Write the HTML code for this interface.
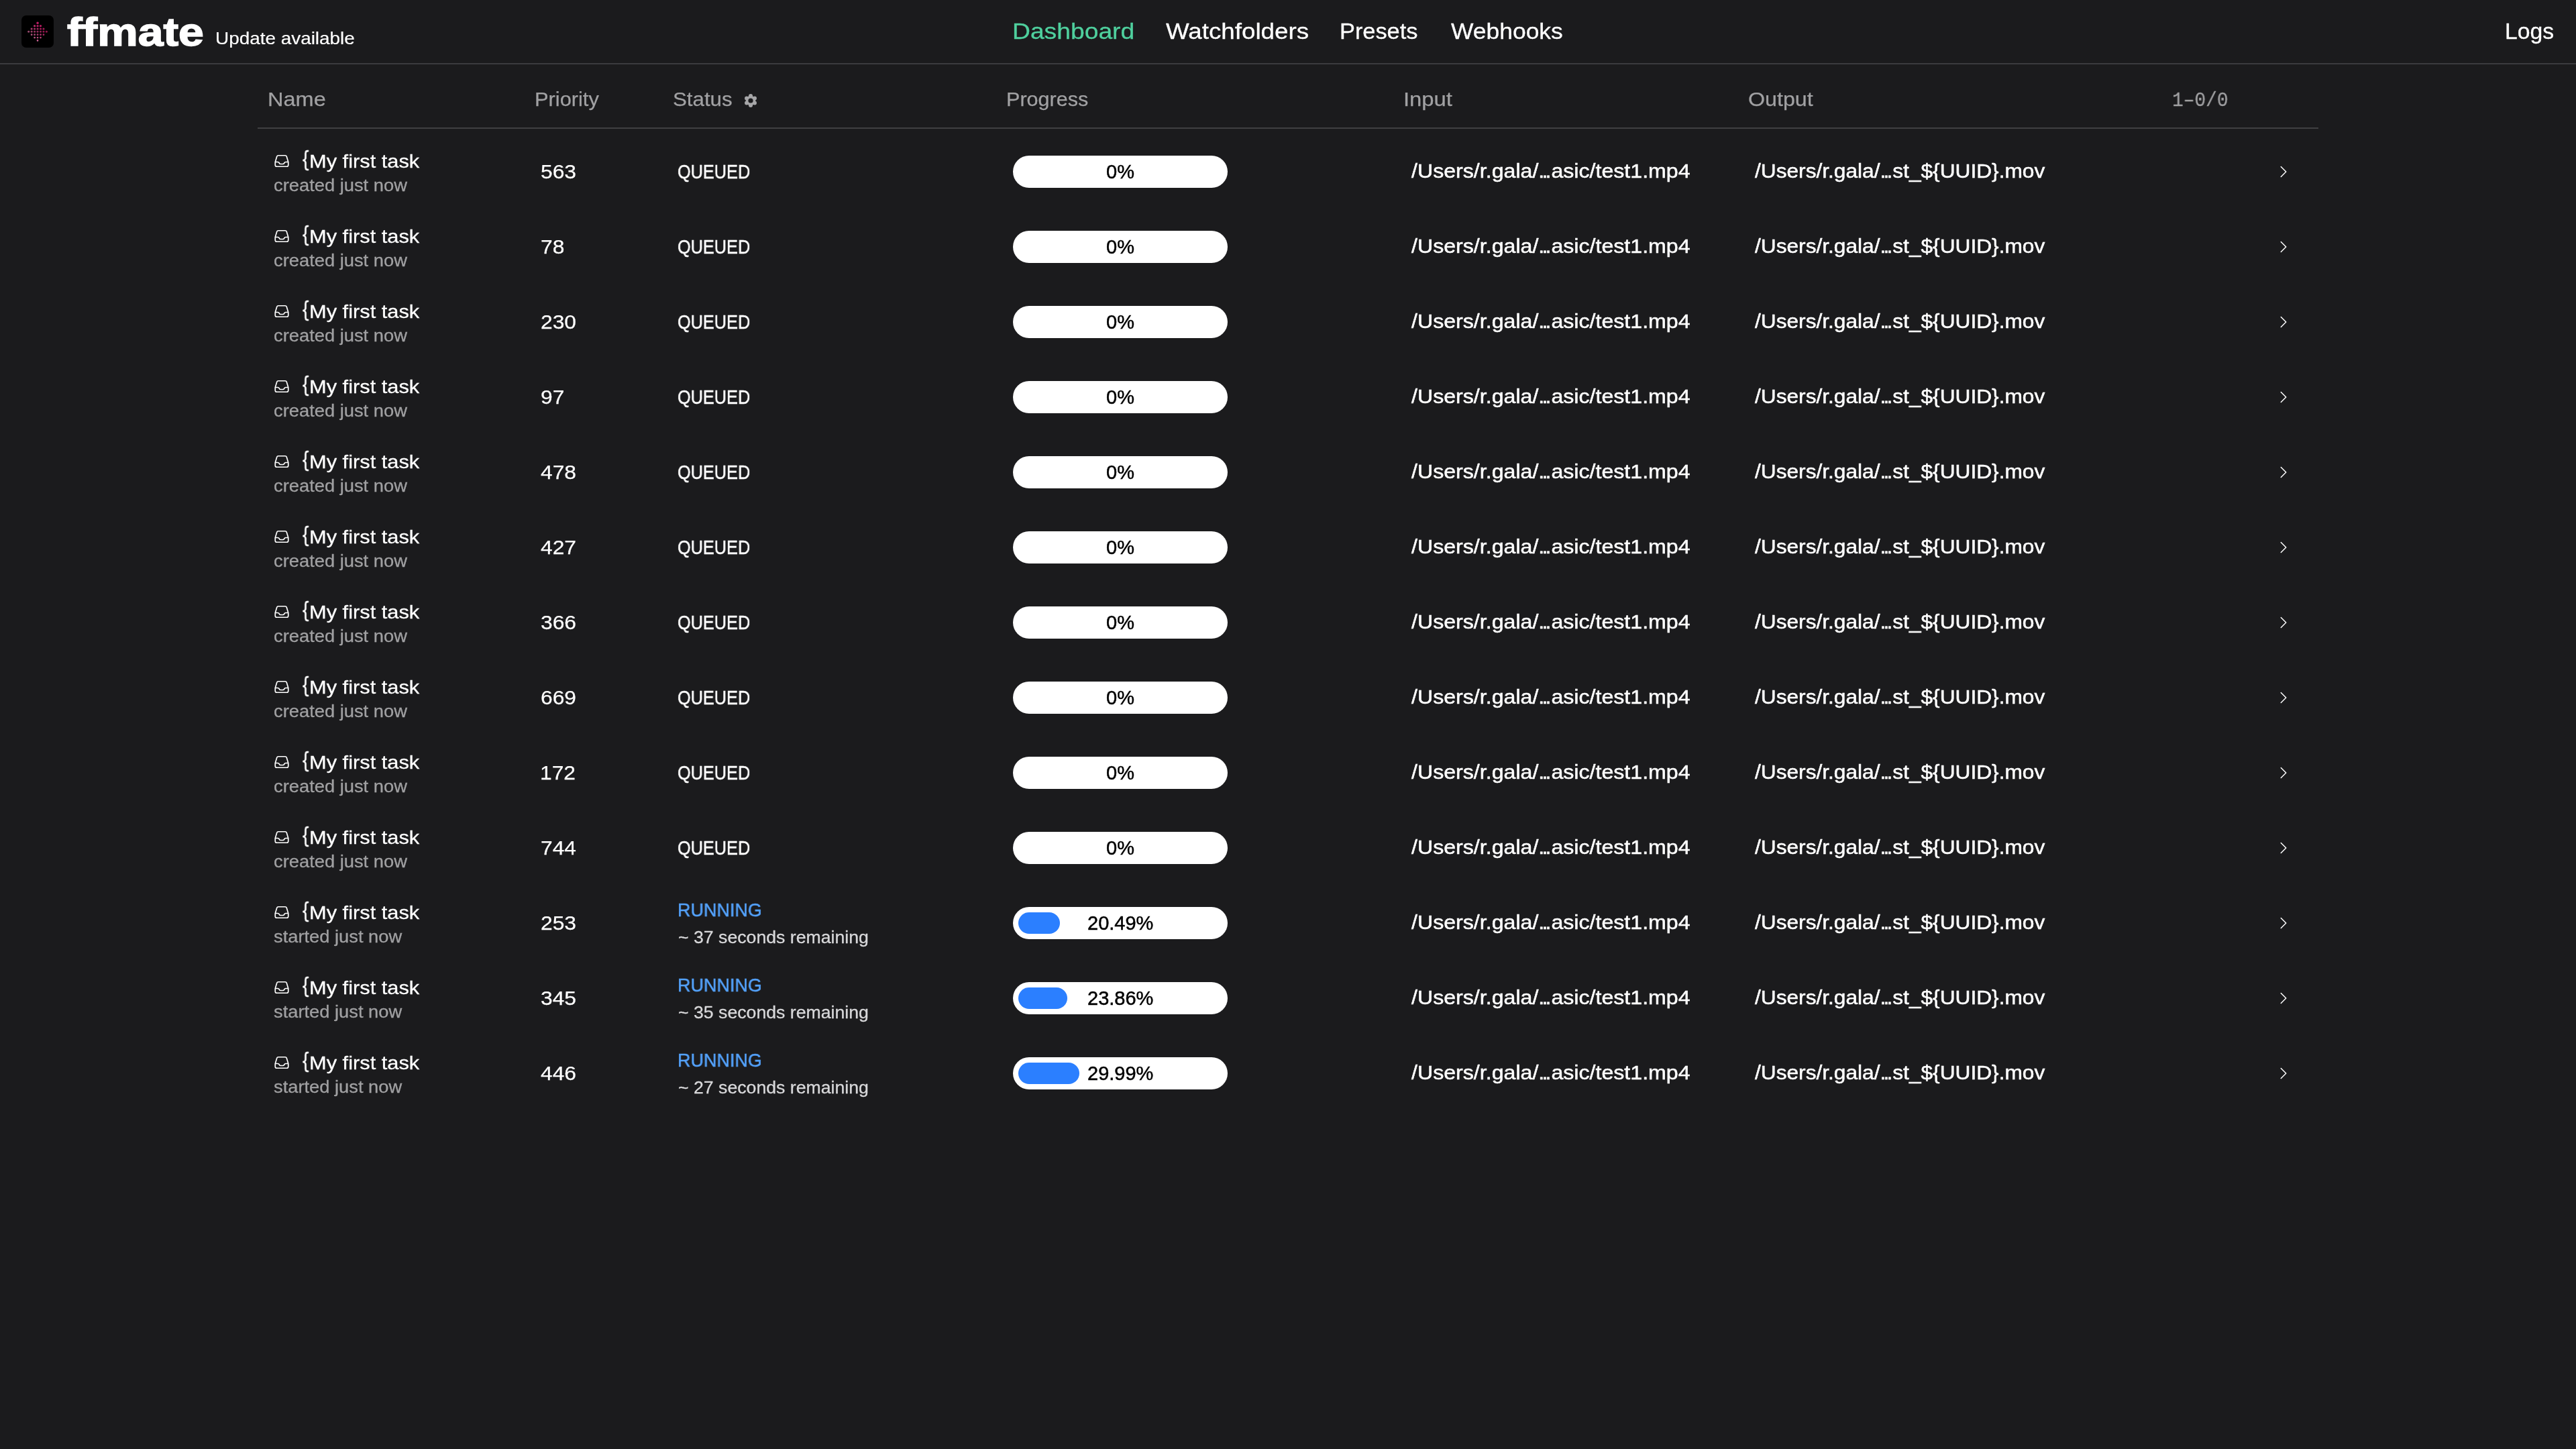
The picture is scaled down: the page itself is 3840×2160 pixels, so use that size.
<!DOCTYPE html>
<html><head><meta charset="utf-8"><title>ffmate</title>
<style>
html,body{margin:0;padding:0;width:3840px;height:2160px;overflow:hidden;background:#1b1b1d;}
body{position:relative;font-family:'Liberation Sans', sans-serif;}
.t{position:absolute;white-space:pre;line-height:1;transform-origin:0 0;will-change:transform;}
.pill{position:absolute;left:1510px;width:320px;height:48px;border-radius:24px;background:#fff;}
.bar{position:absolute;left:1518px;height:32px;border-radius:16px;background:#2b7fff;}
</style></head><body>
<script>(function(){var s=window.innerWidth/3840;if(s>0&&Math.abs(s-1)>0.01){document.documentElement.style.zoom=s;}})();</script>
<div style="position:absolute;left:32px;top:23px;width:48px;height:48px;border-radius:7px;background:#000"></div><svg style="position:absolute;left:32px;top:23px" width="48" height="48" viewBox="0 0 48 48"><circle cx="24.05" cy="11.30" r="1.70" fill="#cd206e" fill-opacity="0.95"/><circle cx="19.60" cy="15.65" r="1.63" fill="#cf2e77" fill-opacity="0.87"/><circle cx="24.05" cy="15.65" r="1.63" fill="#cd206e" fill-opacity="0.87"/><circle cx="28.50" cy="15.65" r="1.63" fill="#cd206e" fill-opacity="0.87"/><circle cx="15.15" cy="20.00" r="1.56" fill="#d44c8a" fill-opacity="0.78"/><circle cx="19.60" cy="20.00" r="1.56" fill="#d23d81" fill-opacity="0.78"/><circle cx="24.05" cy="20.00" r="1.56" fill="#cf2e77" fill-opacity="0.78"/><circle cx="28.50" cy="20.00" r="1.56" fill="#cd206e" fill-opacity="0.78"/><circle cx="32.95" cy="20.00" r="1.56" fill="#cd206e" fill-opacity="0.78"/><circle cx="10.70" cy="24.35" r="1.49" fill="#da699d" fill-opacity="0.70"/><circle cx="15.15" cy="24.35" r="1.49" fill="#d75b94" fill-opacity="0.70"/><circle cx="19.60" cy="24.35" r="1.49" fill="#d44c8a" fill-opacity="0.70"/><circle cx="24.05" cy="24.35" r="1.49" fill="#d23d81" fill-opacity="0.70"/><circle cx="28.50" cy="24.35" r="1.49" fill="#cf2e77" fill-opacity="0.70"/><circle cx="32.95" cy="24.35" r="1.49" fill="#cd206e" fill-opacity="0.70"/><circle cx="37.40" cy="24.35" r="1.49" fill="#cd206e" fill-opacity="0.70"/><circle cx="15.15" cy="28.70" r="1.42" fill="#da699d" fill-opacity="0.78"/><circle cx="19.60" cy="28.70" r="1.42" fill="#d75b94" fill-opacity="0.78"/><circle cx="24.05" cy="28.70" r="1.42" fill="#d44c8a" fill-opacity="0.78"/><circle cx="28.50" cy="28.70" r="1.42" fill="#d23d81" fill-opacity="0.78"/><circle cx="32.95" cy="28.70" r="1.42" fill="#cf2e77" fill-opacity="0.78"/><circle cx="19.60" cy="33.05" r="1.35" fill="#da699d" fill-opacity="0.87"/><circle cx="24.05" cy="33.05" r="1.35" fill="#d75b94" fill-opacity="0.87"/><circle cx="28.50" cy="33.05" r="1.35" fill="#d44c8a" fill-opacity="0.87"/><circle cx="24.05" cy="37.40" r="1.28" fill="#da699d" fill-opacity="0.95"/></svg><div style="position:absolute;left:0;top:94px;width:3840px;height:2px;background:#3b3b3e"></div><div style="position:absolute;left:384px;top:190px;width:3072px;height:2px;background:#3f3f42"></div><svg style="position:absolute;left:1109px;top:140px" width="20" height="20" viewBox="0 0 20 20"><g fill="#a6a6a8"><circle cx="10" cy="10" r="7.3"/><circle cx="10.00" cy="3.10" r="3.0"/><circle cx="15.98" cy="6.55" r="3.0"/><circle cx="15.98" cy="13.45" r="3.0"/><circle cx="10.00" cy="16.90" r="3.0"/><circle cx="4.02" cy="13.45" r="3.0"/><circle cx="4.02" cy="6.55" r="3.0"/></g><circle cx="10" cy="10" r="3.6" fill="#1b1b1d"/></svg><svg style="position:absolute;left:408px;top:228px" width="24" height="24" viewBox="0 0 24 24" fill="none" stroke="#fff" stroke-width="1.7"><path stroke-linecap="round" stroke-linejoin="round" d="M2.25 13.5h3.86a2.25 2.25 0 0 1 2.012 1.244l.256.512a2.25 2.25 0 0 0 2.013 1.244h3.218a2.25 2.25 0 0 0 2.013-1.244l.256-.512a2.25 2.25 0 0 1 2.013-1.244h3.859m-19.5.338V18a2.25 2.25 0 0 0 2.25 2.25h15A2.25 2.25 0 0 0 21.75 18v-4.162c0-.224-.034-.447-.1-.661L19.24 5.338a2.25 2.25 0 0 0-2.15-1.588H6.911a2.25 2.25 0 0 0-2.15 1.588L2.35 13.177a2.25 2.25 0 0 0-.1.661Z"/></svg><div class="pill" style="top:232px"></div><svg style="position:absolute;left:3392px;top:244px" width="24" height="24" viewBox="0 0 24 24" fill="none" stroke="#fff" stroke-width="1.5"><path stroke-linecap="round" stroke-linejoin="round" d="m8.25 4.5 7.5 7.5-7.5 7.5"/></svg><svg style="position:absolute;left:408px;top:340px" width="24" height="24" viewBox="0 0 24 24" fill="none" stroke="#fff" stroke-width="1.7"><path stroke-linecap="round" stroke-linejoin="round" d="M2.25 13.5h3.86a2.25 2.25 0 0 1 2.012 1.244l.256.512a2.25 2.25 0 0 0 2.013 1.244h3.218a2.25 2.25 0 0 0 2.013-1.244l.256-.512a2.25 2.25 0 0 1 2.013-1.244h3.859m-19.5.338V18a2.25 2.25 0 0 0 2.25 2.25h15A2.25 2.25 0 0 0 21.75 18v-4.162c0-.224-.034-.447-.1-.661L19.24 5.338a2.25 2.25 0 0 0-2.15-1.588H6.911a2.25 2.25 0 0 0-2.15 1.588L2.35 13.177a2.25 2.25 0 0 0-.1.661Z"/></svg><div class="pill" style="top:344px"></div><svg style="position:absolute;left:3392px;top:356px" width="24" height="24" viewBox="0 0 24 24" fill="none" stroke="#fff" stroke-width="1.5"><path stroke-linecap="round" stroke-linejoin="round" d="m8.25 4.5 7.5 7.5-7.5 7.5"/></svg><svg style="position:absolute;left:408px;top:452px" width="24" height="24" viewBox="0 0 24 24" fill="none" stroke="#fff" stroke-width="1.7"><path stroke-linecap="round" stroke-linejoin="round" d="M2.25 13.5h3.86a2.25 2.25 0 0 1 2.012 1.244l.256.512a2.25 2.25 0 0 0 2.013 1.244h3.218a2.25 2.25 0 0 0 2.013-1.244l.256-.512a2.25 2.25 0 0 1 2.013-1.244h3.859m-19.5.338V18a2.25 2.25 0 0 0 2.25 2.25h15A2.25 2.25 0 0 0 21.75 18v-4.162c0-.224-.034-.447-.1-.661L19.24 5.338a2.25 2.25 0 0 0-2.15-1.588H6.911a2.25 2.25 0 0 0-2.15 1.588L2.35 13.177a2.25 2.25 0 0 0-.1.661Z"/></svg><div class="pill" style="top:456px"></div><svg style="position:absolute;left:3392px;top:468px" width="24" height="24" viewBox="0 0 24 24" fill="none" stroke="#fff" stroke-width="1.5"><path stroke-linecap="round" stroke-linejoin="round" d="m8.25 4.5 7.5 7.5-7.5 7.5"/></svg><svg style="position:absolute;left:408px;top:564px" width="24" height="24" viewBox="0 0 24 24" fill="none" stroke="#fff" stroke-width="1.7"><path stroke-linecap="round" stroke-linejoin="round" d="M2.25 13.5h3.86a2.25 2.25 0 0 1 2.012 1.244l.256.512a2.25 2.25 0 0 0 2.013 1.244h3.218a2.25 2.25 0 0 0 2.013-1.244l.256-.512a2.25 2.25 0 0 1 2.013-1.244h3.859m-19.5.338V18a2.25 2.25 0 0 0 2.25 2.25h15A2.25 2.25 0 0 0 21.75 18v-4.162c0-.224-.034-.447-.1-.661L19.24 5.338a2.25 2.25 0 0 0-2.15-1.588H6.911a2.25 2.25 0 0 0-2.15 1.588L2.35 13.177a2.25 2.25 0 0 0-.1.661Z"/></svg><div class="pill" style="top:568px"></div><svg style="position:absolute;left:3392px;top:580px" width="24" height="24" viewBox="0 0 24 24" fill="none" stroke="#fff" stroke-width="1.5"><path stroke-linecap="round" stroke-linejoin="round" d="m8.25 4.5 7.5 7.5-7.5 7.5"/></svg><svg style="position:absolute;left:408px;top:676px" width="24" height="24" viewBox="0 0 24 24" fill="none" stroke="#fff" stroke-width="1.7"><path stroke-linecap="round" stroke-linejoin="round" d="M2.25 13.5h3.86a2.25 2.25 0 0 1 2.012 1.244l.256.512a2.25 2.25 0 0 0 2.013 1.244h3.218a2.25 2.25 0 0 0 2.013-1.244l.256-.512a2.25 2.25 0 0 1 2.013-1.244h3.859m-19.5.338V18a2.25 2.25 0 0 0 2.25 2.25h15A2.25 2.25 0 0 0 21.75 18v-4.162c0-.224-.034-.447-.1-.661L19.24 5.338a2.25 2.25 0 0 0-2.15-1.588H6.911a2.25 2.25 0 0 0-2.15 1.588L2.35 13.177a2.25 2.25 0 0 0-.1.661Z"/></svg><div class="pill" style="top:680px"></div><svg style="position:absolute;left:3392px;top:692px" width="24" height="24" viewBox="0 0 24 24" fill="none" stroke="#fff" stroke-width="1.5"><path stroke-linecap="round" stroke-linejoin="round" d="m8.25 4.5 7.5 7.5-7.5 7.5"/></svg><svg style="position:absolute;left:408px;top:788px" width="24" height="24" viewBox="0 0 24 24" fill="none" stroke="#fff" stroke-width="1.7"><path stroke-linecap="round" stroke-linejoin="round" d="M2.25 13.5h3.86a2.25 2.25 0 0 1 2.012 1.244l.256.512a2.25 2.25 0 0 0 2.013 1.244h3.218a2.25 2.25 0 0 0 2.013-1.244l.256-.512a2.25 2.25 0 0 1 2.013-1.244h3.859m-19.5.338V18a2.25 2.25 0 0 0 2.25 2.25h15A2.25 2.25 0 0 0 21.75 18v-4.162c0-.224-.034-.447-.1-.661L19.24 5.338a2.25 2.25 0 0 0-2.15-1.588H6.911a2.25 2.25 0 0 0-2.15 1.588L2.35 13.177a2.25 2.25 0 0 0-.1.661Z"/></svg><div class="pill" style="top:792px"></div><svg style="position:absolute;left:3392px;top:804px" width="24" height="24" viewBox="0 0 24 24" fill="none" stroke="#fff" stroke-width="1.5"><path stroke-linecap="round" stroke-linejoin="round" d="m8.25 4.5 7.5 7.5-7.5 7.5"/></svg><svg style="position:absolute;left:408px;top:900px" width="24" height="24" viewBox="0 0 24 24" fill="none" stroke="#fff" stroke-width="1.7"><path stroke-linecap="round" stroke-linejoin="round" d="M2.25 13.5h3.86a2.25 2.25 0 0 1 2.012 1.244l.256.512a2.25 2.25 0 0 0 2.013 1.244h3.218a2.25 2.25 0 0 0 2.013-1.244l.256-.512a2.25 2.25 0 0 1 2.013-1.244h3.859m-19.5.338V18a2.25 2.25 0 0 0 2.25 2.25h15A2.25 2.25 0 0 0 21.75 18v-4.162c0-.224-.034-.447-.1-.661L19.24 5.338a2.25 2.25 0 0 0-2.15-1.588H6.911a2.25 2.25 0 0 0-2.15 1.588L2.35 13.177a2.25 2.25 0 0 0-.1.661Z"/></svg><div class="pill" style="top:904px"></div><svg style="position:absolute;left:3392px;top:916px" width="24" height="24" viewBox="0 0 24 24" fill="none" stroke="#fff" stroke-width="1.5"><path stroke-linecap="round" stroke-linejoin="round" d="m8.25 4.5 7.5 7.5-7.5 7.5"/></svg><svg style="position:absolute;left:408px;top:1012px" width="24" height="24" viewBox="0 0 24 24" fill="none" stroke="#fff" stroke-width="1.7"><path stroke-linecap="round" stroke-linejoin="round" d="M2.25 13.5h3.86a2.25 2.25 0 0 1 2.012 1.244l.256.512a2.25 2.25 0 0 0 2.013 1.244h3.218a2.25 2.25 0 0 0 2.013-1.244l.256-.512a2.25 2.25 0 0 1 2.013-1.244h3.859m-19.5.338V18a2.25 2.25 0 0 0 2.25 2.25h15A2.25 2.25 0 0 0 21.75 18v-4.162c0-.224-.034-.447-.1-.661L19.24 5.338a2.25 2.25 0 0 0-2.15-1.588H6.911a2.25 2.25 0 0 0-2.15 1.588L2.35 13.177a2.25 2.25 0 0 0-.1.661Z"/></svg><div class="pill" style="top:1016px"></div><svg style="position:absolute;left:3392px;top:1028px" width="24" height="24" viewBox="0 0 24 24" fill="none" stroke="#fff" stroke-width="1.5"><path stroke-linecap="round" stroke-linejoin="round" d="m8.25 4.5 7.5 7.5-7.5 7.5"/></svg><svg style="position:absolute;left:408px;top:1124px" width="24" height="24" viewBox="0 0 24 24" fill="none" stroke="#fff" stroke-width="1.7"><path stroke-linecap="round" stroke-linejoin="round" d="M2.25 13.5h3.86a2.25 2.25 0 0 1 2.012 1.244l.256.512a2.25 2.25 0 0 0 2.013 1.244h3.218a2.25 2.25 0 0 0 2.013-1.244l.256-.512a2.25 2.25 0 0 1 2.013-1.244h3.859m-19.5.338V18a2.25 2.25 0 0 0 2.25 2.25h15A2.25 2.25 0 0 0 21.75 18v-4.162c0-.224-.034-.447-.1-.661L19.24 5.338a2.25 2.25 0 0 0-2.15-1.588H6.911a2.25 2.25 0 0 0-2.15 1.588L2.35 13.177a2.25 2.25 0 0 0-.1.661Z"/></svg><div class="pill" style="top:1128px"></div><svg style="position:absolute;left:3392px;top:1140px" width="24" height="24" viewBox="0 0 24 24" fill="none" stroke="#fff" stroke-width="1.5"><path stroke-linecap="round" stroke-linejoin="round" d="m8.25 4.5 7.5 7.5-7.5 7.5"/></svg><svg style="position:absolute;left:408px;top:1236px" width="24" height="24" viewBox="0 0 24 24" fill="none" stroke="#fff" stroke-width="1.7"><path stroke-linecap="round" stroke-linejoin="round" d="M2.25 13.5h3.86a2.25 2.25 0 0 1 2.012 1.244l.256.512a2.25 2.25 0 0 0 2.013 1.244h3.218a2.25 2.25 0 0 0 2.013-1.244l.256-.512a2.25 2.25 0 0 1 2.013-1.244h3.859m-19.5.338V18a2.25 2.25 0 0 0 2.25 2.25h15A2.25 2.25 0 0 0 21.75 18v-4.162c0-.224-.034-.447-.1-.661L19.24 5.338a2.25 2.25 0 0 0-2.15-1.588H6.911a2.25 2.25 0 0 0-2.15 1.588L2.35 13.177a2.25 2.25 0 0 0-.1.661Z"/></svg><div class="pill" style="top:1240px"></div><svg style="position:absolute;left:3392px;top:1252px" width="24" height="24" viewBox="0 0 24 24" fill="none" stroke="#fff" stroke-width="1.5"><path stroke-linecap="round" stroke-linejoin="round" d="m8.25 4.5 7.5 7.5-7.5 7.5"/></svg><svg style="position:absolute;left:408px;top:1348px" width="24" height="24" viewBox="0 0 24 24" fill="none" stroke="#fff" stroke-width="1.7"><path stroke-linecap="round" stroke-linejoin="round" d="M2.25 13.5h3.86a2.25 2.25 0 0 1 2.012 1.244l.256.512a2.25 2.25 0 0 0 2.013 1.244h3.218a2.25 2.25 0 0 0 2.013-1.244l.256-.512a2.25 2.25 0 0 1 2.013-1.244h3.859m-19.5.338V18a2.25 2.25 0 0 0 2.25 2.25h15A2.25 2.25 0 0 0 21.75 18v-4.162c0-.224-.034-.447-.1-.661L19.24 5.338a2.25 2.25 0 0 0-2.15-1.588H6.911a2.25 2.25 0 0 0-2.15 1.588L2.35 13.177a2.25 2.25 0 0 0-.1.661Z"/></svg><div class="pill" style="top:1352px"></div><div class="bar" style="top:1360px;width:62.29px"></div><svg style="position:absolute;left:3392px;top:1364px" width="24" height="24" viewBox="0 0 24 24" fill="none" stroke="#fff" stroke-width="1.5"><path stroke-linecap="round" stroke-linejoin="round" d="m8.25 4.5 7.5 7.5-7.5 7.5"/></svg><svg style="position:absolute;left:408px;top:1460px" width="24" height="24" viewBox="0 0 24 24" fill="none" stroke="#fff" stroke-width="1.7"><path stroke-linecap="round" stroke-linejoin="round" d="M2.25 13.5h3.86a2.25 2.25 0 0 1 2.012 1.244l.256.512a2.25 2.25 0 0 0 2.013 1.244h3.218a2.25 2.25 0 0 0 2.013-1.244l.256-.512a2.25 2.25 0 0 1 2.013-1.244h3.859m-19.5.338V18a2.25 2.25 0 0 0 2.25 2.25h15A2.25 2.25 0 0 0 21.75 18v-4.162c0-.224-.034-.447-.1-.661L19.24 5.338a2.25 2.25 0 0 0-2.15-1.588H6.911a2.25 2.25 0 0 0-2.15 1.588L2.35 13.177a2.25 2.25 0 0 0-.1.661Z"/></svg><div class="pill" style="top:1464px"></div><div class="bar" style="top:1472px;width:72.53px"></div><svg style="position:absolute;left:3392px;top:1476px" width="24" height="24" viewBox="0 0 24 24" fill="none" stroke="#fff" stroke-width="1.5"><path stroke-linecap="round" stroke-linejoin="round" d="m8.25 4.5 7.5 7.5-7.5 7.5"/></svg><svg style="position:absolute;left:408px;top:1572px" width="24" height="24" viewBox="0 0 24 24" fill="none" stroke="#fff" stroke-width="1.7"><path stroke-linecap="round" stroke-linejoin="round" d="M2.25 13.5h3.86a2.25 2.25 0 0 1 2.012 1.244l.256.512a2.25 2.25 0 0 0 2.013 1.244h3.218a2.25 2.25 0 0 0 2.013-1.244l.256-.512a2.25 2.25 0 0 1 2.013-1.244h3.859m-19.5.338V18a2.25 2.25 0 0 0 2.25 2.25h15A2.25 2.25 0 0 0 21.75 18v-4.162c0-.224-.034-.447-.1-.661L19.24 5.338a2.25 2.25 0 0 0-2.15-1.588H6.911a2.25 2.25 0 0 0-2.15 1.588L2.35 13.177a2.25 2.25 0 0 0-.1.661Z"/></svg><div class="pill" style="top:1576px"></div><div class="bar" style="top:1584px;width:91.17px"></div><svg style="position:absolute;left:3392px;top:1588px" width="24" height="24" viewBox="0 0 24 24" fill="none" stroke="#fff" stroke-width="1.5"><path stroke-linecap="round" stroke-linejoin="round" d="m8.25 4.5 7.5 7.5-7.5 7.5"/></svg>
<div class="t" style="left:99.67px;top:18.30px;font-size:60px;font-weight:700;color:#ffffff;transform:scaleX(1.1322);-webkit-text-stroke:1.6px #ffffff;">ffmate</div><div class="t" style="left:321.17px;top:45.00px;font-size:25px;color:#ffffff;transform:scaleX(1.1158);-webkit-text-stroke:0.2px #ffffff;">Update available</div><div class="t" style="left:1508.76px;top:29.80px;font-size:33px;color:#4fd09e;transform:scaleX(1.1288);-webkit-text-stroke:0.3px #4fd09e;">Dashboard</div><div class="t" style="left:1738.15px;top:29.80px;font-size:33px;color:#ffffff;transform:scaleX(1.1132);-webkit-text-stroke:0.3px #ffffff;">Watchfolders</div><div class="t" style="left:1997.03px;top:29.80px;font-size:33px;color:#ffffff;transform:scaleX(1.0407);-webkit-text-stroke:0.3px #ffffff;">Presets</div><div class="t" style="left:2162.75px;top:29.80px;font-size:33px;color:#ffffff;transform:scaleX(1.0740);-webkit-text-stroke:0.3px #ffffff;">Webhooks</div><div class="t" style="left:3733.78px;top:30.10px;font-size:33px;color:#ffffff;transform:scaleX(1.0221);-webkit-text-stroke:0.3px #ffffff;">Logs</div><div class="t" style="left:398.88px;top:134.30px;font-size:29px;color:#a1a1a3;transform:scaleX(1.1223);-webkit-text-stroke:0.25px #a1a1a3;">Name</div><div class="t" style="left:797.00px;top:134.30px;font-size:29px;color:#a1a1a3;transform:scaleX(1.0619);-webkit-text-stroke:0.25px #a1a1a3;">Priority</div><div class="t" style="left:1002.55px;top:134.30px;font-size:29px;color:#a1a1a3;transform:scaleX(1.0781);-webkit-text-stroke:0.25px #a1a1a3;">Status</div><div class="t" style="left:1500.22px;top:134.30px;font-size:29px;color:#a1a1a3;transform:scaleX(1.0535);-webkit-text-stroke:0.25px #a1a1a3;">Progress</div><div class="t" style="left:2092.03px;top:134.30px;font-size:29px;color:#a1a1a3;transform:scaleX(1.1315);-webkit-text-stroke:0.25px #a1a1a3;">Input</div><div class="t" style="left:2606.32px;top:134.30px;font-size:29px;color:#a1a1a3;transform:scaleX(1.1099);-webkit-text-stroke:0.25px #a1a1a3;">Output</div><div class="t" style="left:3237.89px;top:134.80px;font-size:30px;color:#a1a1a3;transform:scaleX(0.9279);font-family:'Liberation Mono', monospace;-webkit-text-stroke:0.3px #a1a1a3;">1–0/0</div><div class="t" style="left:450.75px;top:220.00px;font-size:32px;color:#ffffff;transform:scaleX(0.8700);-webkit-text-stroke:0.3px #ffffff;">{</div><div class="t" style="left:460.65px;top:227.00px;font-size:28px;color:#ffffff;transform:scaleX(1.1000);-webkit-text-stroke:0.3px #ffffff;">My first task</div><div class="t" style="left:408.30px;top:262.70px;font-size:26px;color:#a0a0a2;transform:scaleX(1.0505);-webkit-text-stroke:0.3px #a0a0a2;">created just now</div><div class="t" style="left:806.33px;top:241.50px;font-size:29px;color:#ffffff;transform:scaleX(1.0935);-webkit-text-stroke:0.25px #ffffff;">563</div><div class="t" style="left:1010.35px;top:241.80px;font-size:29px;color:#ffffff;transform:scaleX(0.8717);-webkit-text-stroke:0.45px #ffffff;">QUEUED</div><div class="t" style="left:1649.31px;top:242.00px;font-size:29px;color:#000000;transform:scaleX(0.9969);-webkit-text-stroke:0.5px #000000;">0%</div><div class="t" style="left:2104.05px;top:241.30px;font-size:29px;color:#ffffff;transform:scaleX(1.1083);-webkit-text-stroke:0.5px #ffffff;">/Users/r.gala/<span style="letter-spacing:-3.5px">..</span>.asic/test1.mp4</div><div class="t" style="left:2616.15px;top:241.30px;font-size:29px;color:#ffffff;transform:scaleX(1.0917);-webkit-text-stroke:0.5px #ffffff;">/Users/r.gala/<span style="letter-spacing:-3.5px">..</span>.st_${UUID}.mov</div><div class="t" style="left:450.75px;top:332.00px;font-size:32px;color:#ffffff;transform:scaleX(0.8700);-webkit-text-stroke:0.3px #ffffff;">{</div><div class="t" style="left:460.65px;top:339.00px;font-size:28px;color:#ffffff;transform:scaleX(1.1000);-webkit-text-stroke:0.3px #ffffff;">My first task</div><div class="t" style="left:408.30px;top:374.70px;font-size:26px;color:#a0a0a2;transform:scaleX(1.0505);-webkit-text-stroke:0.3px #a0a0a2;">created just now</div><div class="t" style="left:806.33px;top:353.50px;font-size:29px;color:#ffffff;transform:scaleX(1.0935);-webkit-text-stroke:0.25px #ffffff;">78</div><div class="t" style="left:1010.35px;top:353.80px;font-size:29px;color:#ffffff;transform:scaleX(0.8717);-webkit-text-stroke:0.45px #ffffff;">QUEUED</div><div class="t" style="left:1649.31px;top:354.00px;font-size:29px;color:#000000;transform:scaleX(0.9969);-webkit-text-stroke:0.5px #000000;">0%</div><div class="t" style="left:2104.05px;top:353.30px;font-size:29px;color:#ffffff;transform:scaleX(1.1083);-webkit-text-stroke:0.5px #ffffff;">/Users/r.gala/<span style="letter-spacing:-3.5px">..</span>.asic/test1.mp4</div><div class="t" style="left:2616.15px;top:353.30px;font-size:29px;color:#ffffff;transform:scaleX(1.0917);-webkit-text-stroke:0.5px #ffffff;">/Users/r.gala/<span style="letter-spacing:-3.5px">..</span>.st_${UUID}.mov</div><div class="t" style="left:450.75px;top:444.00px;font-size:32px;color:#ffffff;transform:scaleX(0.8700);-webkit-text-stroke:0.3px #ffffff;">{</div><div class="t" style="left:460.65px;top:451.00px;font-size:28px;color:#ffffff;transform:scaleX(1.1000);-webkit-text-stroke:0.3px #ffffff;">My first task</div><div class="t" style="left:408.30px;top:486.70px;font-size:26px;color:#a0a0a2;transform:scaleX(1.0505);-webkit-text-stroke:0.3px #a0a0a2;">created just now</div><div class="t" style="left:806.33px;top:465.50px;font-size:29px;color:#ffffff;transform:scaleX(1.0935);-webkit-text-stroke:0.25px #ffffff;">230</div><div class="t" style="left:1010.35px;top:465.80px;font-size:29px;color:#ffffff;transform:scaleX(0.8717);-webkit-text-stroke:0.45px #ffffff;">QUEUED</div><div class="t" style="left:1649.31px;top:466.00px;font-size:29px;color:#000000;transform:scaleX(0.9969);-webkit-text-stroke:0.5px #000000;">0%</div><div class="t" style="left:2104.05px;top:465.30px;font-size:29px;color:#ffffff;transform:scaleX(1.1083);-webkit-text-stroke:0.5px #ffffff;">/Users/r.gala/<span style="letter-spacing:-3.5px">..</span>.asic/test1.mp4</div><div class="t" style="left:2616.15px;top:465.30px;font-size:29px;color:#ffffff;transform:scaleX(1.0917);-webkit-text-stroke:0.5px #ffffff;">/Users/r.gala/<span style="letter-spacing:-3.5px">..</span>.st_${UUID}.mov</div><div class="t" style="left:450.75px;top:556.00px;font-size:32px;color:#ffffff;transform:scaleX(0.8700);-webkit-text-stroke:0.3px #ffffff;">{</div><div class="t" style="left:460.65px;top:563.00px;font-size:28px;color:#ffffff;transform:scaleX(1.1000);-webkit-text-stroke:0.3px #ffffff;">My first task</div><div class="t" style="left:408.30px;top:598.70px;font-size:26px;color:#a0a0a2;transform:scaleX(1.0505);-webkit-text-stroke:0.3px #a0a0a2;">created just now</div><div class="t" style="left:806.33px;top:577.50px;font-size:29px;color:#ffffff;transform:scaleX(1.0935);-webkit-text-stroke:0.25px #ffffff;">97</div><div class="t" style="left:1010.35px;top:577.80px;font-size:29px;color:#ffffff;transform:scaleX(0.8717);-webkit-text-stroke:0.45px #ffffff;">QUEUED</div><div class="t" style="left:1649.31px;top:578.00px;font-size:29px;color:#000000;transform:scaleX(0.9969);-webkit-text-stroke:0.5px #000000;">0%</div><div class="t" style="left:2104.05px;top:577.30px;font-size:29px;color:#ffffff;transform:scaleX(1.1083);-webkit-text-stroke:0.5px #ffffff;">/Users/r.gala/<span style="letter-spacing:-3.5px">..</span>.asic/test1.mp4</div><div class="t" style="left:2616.15px;top:577.30px;font-size:29px;color:#ffffff;transform:scaleX(1.0917);-webkit-text-stroke:0.5px #ffffff;">/Users/r.gala/<span style="letter-spacing:-3.5px">..</span>.st_${UUID}.mov</div><div class="t" style="left:450.75px;top:668.00px;font-size:32px;color:#ffffff;transform:scaleX(0.8700);-webkit-text-stroke:0.3px #ffffff;">{</div><div class="t" style="left:460.65px;top:675.00px;font-size:28px;color:#ffffff;transform:scaleX(1.1000);-webkit-text-stroke:0.3px #ffffff;">My first task</div><div class="t" style="left:408.30px;top:710.70px;font-size:26px;color:#a0a0a2;transform:scaleX(1.0505);-webkit-text-stroke:0.3px #a0a0a2;">created just now</div><div class="t" style="left:806.33px;top:689.50px;font-size:29px;color:#ffffff;transform:scaleX(1.0935);-webkit-text-stroke:0.25px #ffffff;">478</div><div class="t" style="left:1010.35px;top:689.80px;font-size:29px;color:#ffffff;transform:scaleX(0.8717);-webkit-text-stroke:0.45px #ffffff;">QUEUED</div><div class="t" style="left:1649.31px;top:690.00px;font-size:29px;color:#000000;transform:scaleX(0.9969);-webkit-text-stroke:0.5px #000000;">0%</div><div class="t" style="left:2104.05px;top:689.30px;font-size:29px;color:#ffffff;transform:scaleX(1.1083);-webkit-text-stroke:0.5px #ffffff;">/Users/r.gala/<span style="letter-spacing:-3.5px">..</span>.asic/test1.mp4</div><div class="t" style="left:2616.15px;top:689.30px;font-size:29px;color:#ffffff;transform:scaleX(1.0917);-webkit-text-stroke:0.5px #ffffff;">/Users/r.gala/<span style="letter-spacing:-3.5px">..</span>.st_${UUID}.mov</div><div class="t" style="left:450.75px;top:780.00px;font-size:32px;color:#ffffff;transform:scaleX(0.8700);-webkit-text-stroke:0.3px #ffffff;">{</div><div class="t" style="left:460.65px;top:787.00px;font-size:28px;color:#ffffff;transform:scaleX(1.1000);-webkit-text-stroke:0.3px #ffffff;">My first task</div><div class="t" style="left:408.30px;top:822.70px;font-size:26px;color:#a0a0a2;transform:scaleX(1.0505);-webkit-text-stroke:0.3px #a0a0a2;">created just now</div><div class="t" style="left:806.33px;top:801.50px;font-size:29px;color:#ffffff;transform:scaleX(1.0935);-webkit-text-stroke:0.25px #ffffff;">427</div><div class="t" style="left:1010.35px;top:801.80px;font-size:29px;color:#ffffff;transform:scaleX(0.8717);-webkit-text-stroke:0.45px #ffffff;">QUEUED</div><div class="t" style="left:1649.31px;top:802.00px;font-size:29px;color:#000000;transform:scaleX(0.9969);-webkit-text-stroke:0.5px #000000;">0%</div><div class="t" style="left:2104.05px;top:801.30px;font-size:29px;color:#ffffff;transform:scaleX(1.1083);-webkit-text-stroke:0.5px #ffffff;">/Users/r.gala/<span style="letter-spacing:-3.5px">..</span>.asic/test1.mp4</div><div class="t" style="left:2616.15px;top:801.30px;font-size:29px;color:#ffffff;transform:scaleX(1.0917);-webkit-text-stroke:0.5px #ffffff;">/Users/r.gala/<span style="letter-spacing:-3.5px">..</span>.st_${UUID}.mov</div><div class="t" style="left:450.75px;top:892.00px;font-size:32px;color:#ffffff;transform:scaleX(0.8700);-webkit-text-stroke:0.3px #ffffff;">{</div><div class="t" style="left:460.65px;top:899.00px;font-size:28px;color:#ffffff;transform:scaleX(1.1000);-webkit-text-stroke:0.3px #ffffff;">My first task</div><div class="t" style="left:408.30px;top:934.70px;font-size:26px;color:#a0a0a2;transform:scaleX(1.0505);-webkit-text-stroke:0.3px #a0a0a2;">created just now</div><div class="t" style="left:806.33px;top:913.50px;font-size:29px;color:#ffffff;transform:scaleX(1.0935);-webkit-text-stroke:0.25px #ffffff;">366</div><div class="t" style="left:1010.35px;top:913.80px;font-size:29px;color:#ffffff;transform:scaleX(0.8717);-webkit-text-stroke:0.45px #ffffff;">QUEUED</div><div class="t" style="left:1649.31px;top:914.00px;font-size:29px;color:#000000;transform:scaleX(0.9969);-webkit-text-stroke:0.5px #000000;">0%</div><div class="t" style="left:2104.05px;top:913.30px;font-size:29px;color:#ffffff;transform:scaleX(1.1083);-webkit-text-stroke:0.5px #ffffff;">/Users/r.gala/<span style="letter-spacing:-3.5px">..</span>.asic/test1.mp4</div><div class="t" style="left:2616.15px;top:913.30px;font-size:29px;color:#ffffff;transform:scaleX(1.0917);-webkit-text-stroke:0.5px #ffffff;">/Users/r.gala/<span style="letter-spacing:-3.5px">..</span>.st_${UUID}.mov</div><div class="t" style="left:450.75px;top:1004.00px;font-size:32px;color:#ffffff;transform:scaleX(0.8700);-webkit-text-stroke:0.3px #ffffff;">{</div><div class="t" style="left:460.65px;top:1011.00px;font-size:28px;color:#ffffff;transform:scaleX(1.1000);-webkit-text-stroke:0.3px #ffffff;">My first task</div><div class="t" style="left:408.30px;top:1046.70px;font-size:26px;color:#a0a0a2;transform:scaleX(1.0505);-webkit-text-stroke:0.3px #a0a0a2;">created just now</div><div class="t" style="left:806.33px;top:1025.50px;font-size:29px;color:#ffffff;transform:scaleX(1.0935);-webkit-text-stroke:0.25px #ffffff;">669</div><div class="t" style="left:1010.35px;top:1025.80px;font-size:29px;color:#ffffff;transform:scaleX(0.8717);-webkit-text-stroke:0.45px #ffffff;">QUEUED</div><div class="t" style="left:1649.31px;top:1026.00px;font-size:29px;color:#000000;transform:scaleX(0.9969);-webkit-text-stroke:0.5px #000000;">0%</div><div class="t" style="left:2104.05px;top:1025.30px;font-size:29px;color:#ffffff;transform:scaleX(1.1083);-webkit-text-stroke:0.5px #ffffff;">/Users/r.gala/<span style="letter-spacing:-3.5px">..</span>.asic/test1.mp4</div><div class="t" style="left:2616.15px;top:1025.30px;font-size:29px;color:#ffffff;transform:scaleX(1.0917);-webkit-text-stroke:0.5px #ffffff;">/Users/r.gala/<span style="letter-spacing:-3.5px">..</span>.st_${UUID}.mov</div><div class="t" style="left:450.75px;top:1116.00px;font-size:32px;color:#ffffff;transform:scaleX(0.8700);-webkit-text-stroke:0.3px #ffffff;">{</div><div class="t" style="left:460.65px;top:1123.00px;font-size:28px;color:#ffffff;transform:scaleX(1.1000);-webkit-text-stroke:0.3px #ffffff;">My first task</div><div class="t" style="left:408.30px;top:1158.70px;font-size:26px;color:#a0a0a2;transform:scaleX(1.0505);-webkit-text-stroke:0.3px #a0a0a2;">created just now</div><div class="t" style="left:805.24px;top:1137.50px;font-size:29px;color:#ffffff;transform:scaleX(1.0935);-webkit-text-stroke:0.25px #ffffff;">172</div><div class="t" style="left:1010.35px;top:1137.80px;font-size:29px;color:#ffffff;transform:scaleX(0.8717);-webkit-text-stroke:0.45px #ffffff;">QUEUED</div><div class="t" style="left:1649.31px;top:1138.00px;font-size:29px;color:#000000;transform:scaleX(0.9969);-webkit-text-stroke:0.5px #000000;">0%</div><div class="t" style="left:2104.05px;top:1137.30px;font-size:29px;color:#ffffff;transform:scaleX(1.1083);-webkit-text-stroke:0.5px #ffffff;">/Users/r.gala/<span style="letter-spacing:-3.5px">..</span>.asic/test1.mp4</div><div class="t" style="left:2616.15px;top:1137.30px;font-size:29px;color:#ffffff;transform:scaleX(1.0917);-webkit-text-stroke:0.5px #ffffff;">/Users/r.gala/<span style="letter-spacing:-3.5px">..</span>.st_${UUID}.mov</div><div class="t" style="left:450.75px;top:1228.00px;font-size:32px;color:#ffffff;transform:scaleX(0.8700);-webkit-text-stroke:0.3px #ffffff;">{</div><div class="t" style="left:460.65px;top:1235.00px;font-size:28px;color:#ffffff;transform:scaleX(1.1000);-webkit-text-stroke:0.3px #ffffff;">My first task</div><div class="t" style="left:408.30px;top:1270.70px;font-size:26px;color:#a0a0a2;transform:scaleX(1.0505);-webkit-text-stroke:0.3px #a0a0a2;">created just now</div><div class="t" style="left:806.33px;top:1249.50px;font-size:29px;color:#ffffff;transform:scaleX(1.0935);-webkit-text-stroke:0.25px #ffffff;">744</div><div class="t" style="left:1010.35px;top:1249.80px;font-size:29px;color:#ffffff;transform:scaleX(0.8717);-webkit-text-stroke:0.45px #ffffff;">QUEUED</div><div class="t" style="left:1649.31px;top:1250.00px;font-size:29px;color:#000000;transform:scaleX(0.9969);-webkit-text-stroke:0.5px #000000;">0%</div><div class="t" style="left:2104.05px;top:1249.30px;font-size:29px;color:#ffffff;transform:scaleX(1.1083);-webkit-text-stroke:0.5px #ffffff;">/Users/r.gala/<span style="letter-spacing:-3.5px">..</span>.asic/test1.mp4</div><div class="t" style="left:2616.15px;top:1249.30px;font-size:29px;color:#ffffff;transform:scaleX(1.0917);-webkit-text-stroke:0.5px #ffffff;">/Users/r.gala/<span style="letter-spacing:-3.5px">..</span>.st_${UUID}.mov</div><div class="t" style="left:450.75px;top:1340.00px;font-size:32px;color:#ffffff;transform:scaleX(0.8700);-webkit-text-stroke:0.3px #ffffff;">{</div><div class="t" style="left:460.65px;top:1347.00px;font-size:28px;color:#ffffff;transform:scaleX(1.1000);-webkit-text-stroke:0.3px #ffffff;">My first task</div><div class="t" style="left:408.30px;top:1382.50px;font-size:26px;color:#a0a0a2;transform:scaleX(1.0497);-webkit-text-stroke:0.3px #a0a0a2;">started just now</div><div class="t" style="left:806.33px;top:1361.50px;font-size:29px;color:#ffffff;transform:scaleX(1.0935);-webkit-text-stroke:0.25px #ffffff;">253</div><div class="t" style="left:1010.03px;top:1342.70px;font-size:28px;color:#54a2fb;transform:scaleX(0.9614);-webkit-text-stroke:0.5px #54a2fb;">RUNNING</div><div class="t" style="left:1010.78px;top:1385.00px;font-size:25px;color:#d8d8da;transform:scaleX(1.0667);-webkit-text-stroke:0.3px #d8d8da;">~ 37 seconds remaining</div><div class="t" style="left:1620.90px;top:1362.00px;font-size:29px;color:#000000;transform:scaleX(0.9969);-webkit-text-stroke:0.5px #000000;">20.49%</div><div class="t" style="left:2104.05px;top:1361.30px;font-size:29px;color:#ffffff;transform:scaleX(1.1083);-webkit-text-stroke:0.5px #ffffff;">/Users/r.gala/<span style="letter-spacing:-3.5px">..</span>.asic/test1.mp4</div><div class="t" style="left:2616.15px;top:1361.30px;font-size:29px;color:#ffffff;transform:scaleX(1.0917);-webkit-text-stroke:0.5px #ffffff;">/Users/r.gala/<span style="letter-spacing:-3.5px">..</span>.st_${UUID}.mov</div><div class="t" style="left:450.75px;top:1452.00px;font-size:32px;color:#ffffff;transform:scaleX(0.8700);-webkit-text-stroke:0.3px #ffffff;">{</div><div class="t" style="left:460.65px;top:1459.00px;font-size:28px;color:#ffffff;transform:scaleX(1.1000);-webkit-text-stroke:0.3px #ffffff;">My first task</div><div class="t" style="left:408.30px;top:1494.50px;font-size:26px;color:#a0a0a2;transform:scaleX(1.0497);-webkit-text-stroke:0.3px #a0a0a2;">started just now</div><div class="t" style="left:806.33px;top:1473.50px;font-size:29px;color:#ffffff;transform:scaleX(1.0935);-webkit-text-stroke:0.25px #ffffff;">345</div><div class="t" style="left:1010.03px;top:1454.70px;font-size:28px;color:#54a2fb;transform:scaleX(0.9614);-webkit-text-stroke:0.5px #54a2fb;">RUNNING</div><div class="t" style="left:1010.78px;top:1497.00px;font-size:25px;color:#d8d8da;transform:scaleX(1.0667);-webkit-text-stroke:0.3px #d8d8da;">~ 35 seconds remaining</div><div class="t" style="left:1620.90px;top:1474.00px;font-size:29px;color:#000000;transform:scaleX(0.9969);-webkit-text-stroke:0.5px #000000;">23.86%</div><div class="t" style="left:2104.05px;top:1473.30px;font-size:29px;color:#ffffff;transform:scaleX(1.1083);-webkit-text-stroke:0.5px #ffffff;">/Users/r.gala/<span style="letter-spacing:-3.5px">..</span>.asic/test1.mp4</div><div class="t" style="left:2616.15px;top:1473.30px;font-size:29px;color:#ffffff;transform:scaleX(1.0917);-webkit-text-stroke:0.5px #ffffff;">/Users/r.gala/<span style="letter-spacing:-3.5px">..</span>.st_${UUID}.mov</div><div class="t" style="left:450.75px;top:1564.00px;font-size:32px;color:#ffffff;transform:scaleX(0.8700);-webkit-text-stroke:0.3px #ffffff;">{</div><div class="t" style="left:460.65px;top:1571.00px;font-size:28px;color:#ffffff;transform:scaleX(1.1000);-webkit-text-stroke:0.3px #ffffff;">My first task</div><div class="t" style="left:408.30px;top:1606.50px;font-size:26px;color:#a0a0a2;transform:scaleX(1.0497);-webkit-text-stroke:0.3px #a0a0a2;">started just now</div><div class="t" style="left:806.33px;top:1585.50px;font-size:29px;color:#ffffff;transform:scaleX(1.0935);-webkit-text-stroke:0.25px #ffffff;">446</div><div class="t" style="left:1010.03px;top:1566.70px;font-size:28px;color:#54a2fb;transform:scaleX(0.9614);-webkit-text-stroke:0.5px #54a2fb;">RUNNING</div><div class="t" style="left:1010.78px;top:1609.00px;font-size:25px;color:#d8d8da;transform:scaleX(1.0667);-webkit-text-stroke:0.3px #d8d8da;">~ 27 seconds remaining</div><div class="t" style="left:1620.90px;top:1586.00px;font-size:29px;color:#000000;transform:scaleX(0.9969);-webkit-text-stroke:0.5px #000000;">29.99%</div><div class="t" style="left:2104.05px;top:1585.30px;font-size:29px;color:#ffffff;transform:scaleX(1.1083);-webkit-text-stroke:0.5px #ffffff;">/Users/r.gala/<span style="letter-spacing:-3.5px">..</span>.asic/test1.mp4</div><div class="t" style="left:2616.15px;top:1585.30px;font-size:29px;color:#ffffff;transform:scaleX(1.0917);-webkit-text-stroke:0.5px #ffffff;">/Users/r.gala/<span style="letter-spacing:-3.5px">..</span>.st_${UUID}.mov</div>
</body></html>
